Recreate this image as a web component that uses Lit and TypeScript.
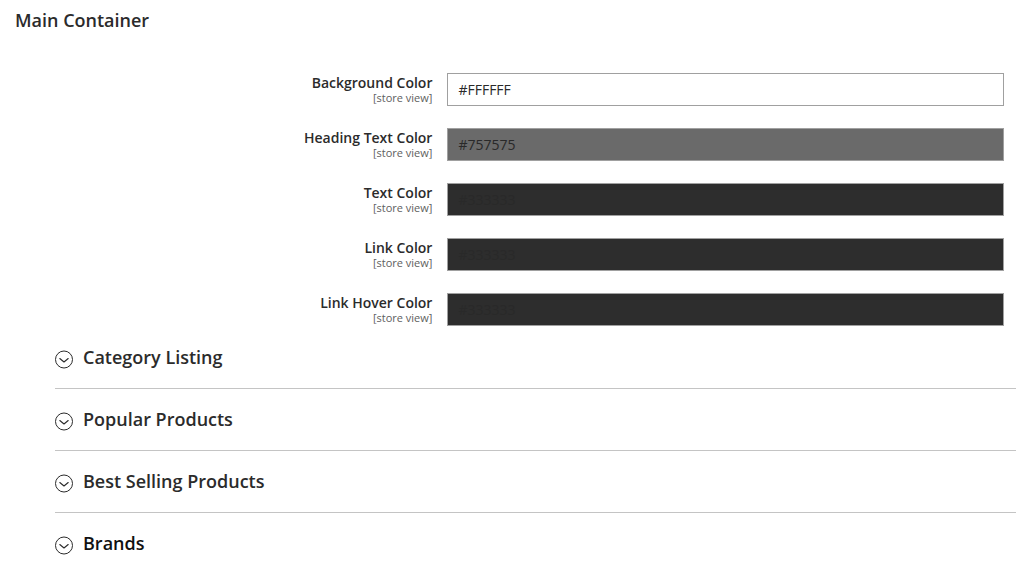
import { LitElement, html, css } from "lit";
import { customElement, property } from "lit/decorators.js";
import { styleMap } from "lit/directives/style-map.js";

interface ColorField {
  id: string;
  label: string;
  value: string;
  swatch: string;
}

const FIELDS: ColorField[] = [
  { id: "background", label: "Background Color", value: "#FFFFFF", swatch: "#ffffff" },
  { id: "heading", label: "Heading Text Color", value: "#757575", swatch: "#6a6a6a" },
  { id: "text", label: "Text Color", value: "#333333", swatch: "#2d2d2d" },
  { id: "link", label: "Link Color", value: "#333333", swatch: "#2d2d2d" },
  { id: "link-hover", label: "Link Hover Color", value: "#333333", swatch: "#2d2d2d" },
];

const SECTIONS = ["Category Listing", "Popular Products", "Best Selling Products", "Brands"];

@customElement("color-field")
export class ColorFieldRow extends LitElement {
  @property({ attribute: false }) field!: ColorField;

  static styles = css`
    :host {
      display: grid;
      grid-template-columns: minmax(0, 3fr) minmax(0, 4fr);
      column-gap: 15px;
      align-items: start;
    }
    .label {
      text-align: right;
      font-size: 14px;
      font-weight: 600;
      line-height: 19px;
      color: #2b2b2b;
    }
    .scope {
      display: block;
      font-size: 11px;
      font-weight: 400;
      line-height: 12px;
      color: #606060;
    }
    .input {
      box-sizing: border-box;
      width: 100%;
      height: 33px;
      margin: 0;
      padding: 0 10px;
      border: 1px solid #a0a0a0;
      border-radius: 0;
      font: inherit;
      font-size: 14px;
      color: #292929;
    }
  `;

  render() {
    const { id, label, value, swatch } = this.field;
    return html`
      <label class="label" for=${id}>${label}<span class="scope">[store view]</span></label>
      <input class="input" id=${id} type="text" .value=${value} style=${styleMap({ backgroundColor: swatch })} />
    `;
  }
}

@customElement("app-root")
export class AppRoot extends LitElement {
  static styles = css`
    :host {
      display: block;
      font-family: "Open Sans", "Noto Sans", sans-serif;
      color: #2b2b2b;
      background: #fff;
      overflow-x: hidden;
    }
    .title {
      margin: 0;
      padding: 8px 15px 40px;
      font-size: 18px;
      font-weight: 600;
      line-height: 25px;
    }
    .fields {
      display: grid;
      row-gap: 22px;
      padding: 0 12px 0 15px;
    }
    .sections {
      margin: 1px 0 0 55px;
      padding: 0;
      list-style: none;
    }
    .section {
      border-bottom: 1px solid #c4c4c4;
    }
    .section:last-child {
      border-bottom: 0;
      color: #111;
    }
    .heading {
      margin: 0;
      font-size: 18px;
      font-weight: 600;
      line-height: 23px;
    }
    .toggle {
      display: flex;
      align-items: center;
      gap: 9px;
      width: 100%;
      padding: 19px 0;
      border: 0;
      background: none;
      font: inherit;
      color: inherit;
      text-align: left;
      cursor: pointer;
    }
    .icon {
      flex: none;
      width: 19px;
      height: 19px;
      margin-top: 4px;
      fill: none;
      stroke: #2b2b2b;
    }
  `;

  render() {
    return html`
      <h2 class="title">Main Container</h2>
      <form class="fields">
        ${FIELDS.map((f) => html`<color-field .field=${f}></color-field>`)}
      </form>
      <ul class="sections">
        ${SECTIONS.map(
          (name) => html`
            <li class="section">
              <h3 class="heading">
                <button class="toggle" type="button" aria-expanded="false">
                  <svg class="icon" viewBox="0 0 19 19" aria-hidden="true">
                    <circle cx="9" cy="9.5" r="8.5" stroke-width="1" />
                    <path d="M4.8 8.5 L9 12 L13.2 8.5" stroke-width="1.1" stroke-linecap="round" stroke-linejoin="round" />
                  </svg>
                  <span>${name}</span>
                </button>
              </h3>
            </li>
          `
        )}
      </ul>
    `;
  }
}
